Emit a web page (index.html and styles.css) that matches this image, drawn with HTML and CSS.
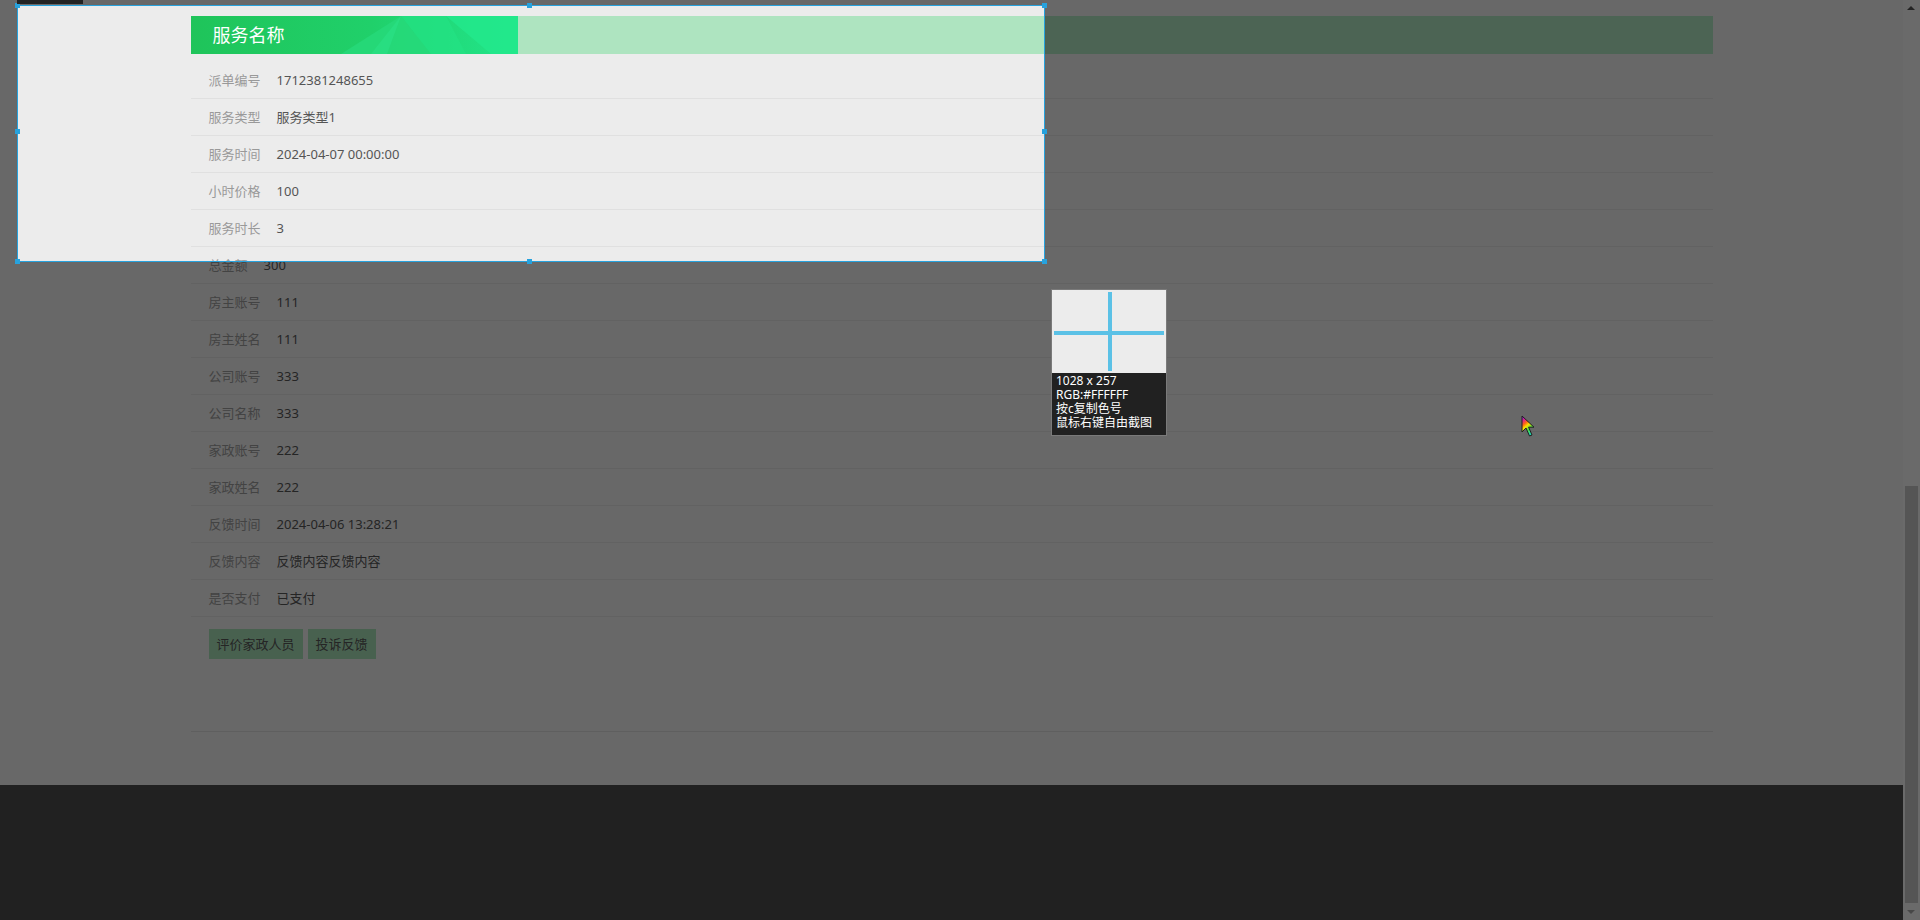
FILE: index.html
```html
<!DOCTYPE html>
<html lang="zh-CN">
<head>
  <meta charset="UTF-8">
  <meta name="viewport" content="width=device-width, initial-scale=1.0">
  <title>服务详情</title>
  <link rel="stylesheet" href="styles.css">
</head>
<body>
  <div class="screen">
    <div class="page">
      <div class="detail">
        <div class="detail-title">
          <div class="title-art">
            <svg class="title-bg" width="327" height="38" viewBox="0 0 327 38" preserveAspectRatio="none">
              <defs>
                <linearGradient id="titleGrad" x1="0" y1="0" x2="1" y2="0">
                  <stop offset="0" stop-color="#1fc45a"/>
                  <stop offset="0.55" stop-color="#20d06a"/>
                  <stop offset="1" stop-color="#22e58a"/>
                </linearGradient>
              </defs>
              <rect width="327" height="38" fill="url(#titleGrad)"/>
              <polygon points="150,38 210,0 240,38" fill="#27da7a" opacity="0.8"/>
              <polygon points="210,0 255,0 275,38 240,38" fill="#24e285" opacity="0.7"/>
              <polygon points="255,0 327,0 327,38 300,38" fill="#23e88c" opacity="0.8"/>
              <polygon points="180,38 210,0 196,38" fill="#2be48a" opacity="0.5"/>
            </svg>
            <span class="title-text">服务名称</span>
          </div>
        </div>

        <ul class="info-list">
          <li><span class="info-label">派单编号</span><span class="info-value">1712381248655</span></li>
          <li><span class="info-label">服务类型</span><span class="info-value">服务类型1</span></li>
          <li><span class="info-label">服务时间</span><span class="info-value">2024-04-07 00:00:00</span></li>
          <li><span class="info-label">小时价格</span><span class="info-value">100</span></li>
          <li><span class="info-label">服务时长</span><span class="info-value">3</span></li>
          <li><span class="info-label">总金额</span><span class="info-value">300</span></li>
          <li><span class="info-label">房主账号</span><span class="info-value">111</span></li>
          <li><span class="info-label">房主姓名</span><span class="info-value">111</span></li>
          <li><span class="info-label">公司账号</span><span class="info-value">333</span></li>
          <li><span class="info-label">公司名称</span><span class="info-value">333</span></li>
          <li><span class="info-label">家政账号</span><span class="info-value">222</span></li>
          <li><span class="info-label">家政姓名</span><span class="info-value">222</span></li>
          <li><span class="info-label">反馈时间</span><span class="info-value">2024-04-06 13:28:21</span></li>
          <li><span class="info-label">反馈内容</span><span class="info-value">反馈内容反馈内容</span></li>
          <li><span class="info-label">是否支付</span><span class="info-value">已支付</span></li>
        </ul>

        <div class="actions">
          <button class="btn">评价家政人员</button>
          <button class="btn">投诉反馈</button>
        </div>
      </div>

      <div class="footer"></div>
    </div>

    <div class="scrollbar">
      <div class="scroll-arrow up"></div>
      <div class="scroll-track">
        <div class="scroll-thumb"></div>
      </div>
      <div class="scroll-arrow down"></div>
    </div>

    <!-- capture tool overlay -->
    <div class="cap-tab"></div>
    <div class="cap-box">
      <i class="handle h-tl"></i><i class="handle h-tc"></i><i class="handle h-tr"></i>
      <i class="handle h-ml"></i><i class="handle h-mr"></i>
      <i class="handle h-bl"></i><i class="handle h-bc"></i><i class="handle h-br"></i>
    </div>

    <div class="magnifier">
      <div class="mag-view">
        <span class="mag-v"></span>
        <span class="mag-h"></span>
      </div>
      <div class="mag-info">
        <div>1028 x 257</div>
        <div>RGB:#FFFFFF</div>
        <div>按c复制色号</div>
        <div>鼠标右键自由截图</div>
      </div>
    </div>

    <svg class="cursor" width="17" height="24" viewBox="0 0 17 24">
      <defs>
        <linearGradient id="rainbow" x1="0" y1="0" x2="0.5" y2="1">
          <stop offset="0" stop-color="#7a1cff"/>
          <stop offset="0.22" stop-color="#e0208c"/>
          <stop offset="0.4" stop-color="#ff6a10"/>
          <stop offset="0.55" stop-color="#f8e000"/>
          <stop offset="0.75" stop-color="#50e040"/>
          <stop offset="1" stop-color="#20d8b0"/>
        </linearGradient>
      </defs>
      <path d="M1 1 L1 17 L5 13 L8.5 21 L11 20 L7.6 12.2 L13 12.2 Z" fill="url(#rainbow)" stroke="#202020" stroke-width="1"/>
    </svg>
  </div>
</body>
</html>
```

FILE: styles.css
```css
* {
  box-sizing: border-box;
}

body {
  margin: 0;
  background-color: #ececec;
  font-family: "Noto Sans", "Noto Sans CJK SC", sans-serif;
  font-size: 13px;
  color: #555;
}

.screen {
  position: relative;
  display: flex;
  width: 1920px;
  height: 920px;
  overflow: hidden;
}

.page {
  flex: 1;
  display: flex;
  flex-direction: column;
}

/* detail card */
.detail {
  width: 1522px;
  margin: 0 auto;
  padding: 16px 0 72px;
  border-bottom: 1px solid #d9d9d9;
}

.detail-title {
  height: 38px;
  background-color: #aee4c0;
}

.title-art {
  position: relative;
  width: 327px;
  height: 38px;
  display: flex;
  align-items: center;
}

.title-bg {
  position: absolute;
  left: 0;
  top: 0;
}

.title-text {
  position: relative;
  padding-left: 22px;
  color: #fff;
  font-size: 18px;
  line-height: 20px;
}

.info-list {
  list-style: none;
  margin: 8px 0 0;
  padding: 0;
}

.info-list li {
  display: flex;
  align-items: center;
  height: 37px;
  padding-left: 18px;
  border-bottom: 1px solid #e0e0e0;
  line-height: 18px;
}

.info-label {
  color: #999;
  margin-right: 16px;
}

.info-value {
  color: #555;
}

.actions {
  display: flex;
  gap: 5px;
  margin-top: 12px;
  padding-left: 18px;
}

.btn {
  height: 30px;
  padding: 0 8px;
  border: none;
  background-color: #a4dcb4;
  color: #555;
  font-family: inherit;
  font-size: 13px;
  line-height: 30px;
}

.footer {
  margin-top: 53px;
  height: 135px;
  background-color: #4b4b4b;
}

/* window scrollbar */
.scrollbar {
  width: 17px;
  display: flex;
  flex-direction: column;
  background-color: #f1f1f1;
}

.scroll-arrow {
  height: 17px;
  position: relative;
}

.scroll-arrow::after {
  content: "";
  position: absolute;
  left: 4px;
  border-left: 4px solid transparent;
  border-right: 4px solid transparent;
}

.scroll-arrow.up::after {
  top: 6px;
  border-bottom: 4px solid #505050;
}

.scroll-arrow.down::after {
  top: 7px;
  border-top: 4px solid #a3a3a3;
}

.scroll-track {
  flex: 1;
  display: flex;
  flex-direction: column;
  justify-content: flex-end;
}

.scroll-thumb {
  height: 417px;
  margin: 0 2px;
  background-color: #c1c1c1;
}

/* capture overlay */
.cap-tab {
  position: absolute;
  left: 17px;
  top: 0;
  width: 66px;
  height: 4px;
  background-color: #222;
  z-index: 3;
}

.cap-box {
  position: absolute;
  left: 17px;
  top: 5px;
  width: 1028px;
  height: 257px;
  border: 1px solid #27a2dd;
  box-shadow: 0 0 0 4000px rgba(0, 0, 0, 0.56);
  z-index: 2;
}

.handle {
  position: absolute;
  width: 5px;
  height: 5px;
  background-color: #27a2dd;
}

.h-tl { left: -3px; top: -3px; }
.h-tc { left: 509px; top: -3px; }
.h-tr { right: -3px; top: -3px; }
.h-ml { left: -3px; top: 123px; }
.h-mr { right: -3px; top: 123px; }
.h-bl { left: -3px; bottom: -3px; }
.h-bc { left: 509px; bottom: -3px; }
.h-br { right: -3px; bottom: -3px; }

.magnifier {
  position: absolute;
  left: 1051px;
  top: 289px;
  width: 116px;
  border: 1px solid #7a7a7a;
  z-index: 4;
}

.mag-view {
  position: relative;
  height: 83px;
  background-color: #ececec;
}

.mag-v {
  position: absolute;
  left: 56px;
  top: 2px;
  width: 4px;
  height: 79px;
  background-color: #5bc1e6;
}

.mag-h {
  position: absolute;
  left: 2px;
  top: 41px;
  width: 110px;
  height: 4px;
  background-color: #5bc1e6;
}

.mag-info {
  height: 62px;
  padding: 1px 4px 0;
  background-color: #212121;
  color: #fff;
  font-size: 12px;
  line-height: 14px;
  white-space: nowrap;
}

.cursor {
  position: absolute;
  left: 1521px;
  top: 415px;
  z-index: 5;
}
```
